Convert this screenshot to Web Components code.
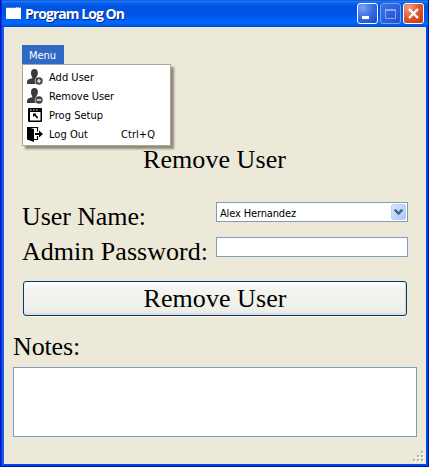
<!DOCTYPE html>
<html lang="en"><head><meta charset="utf-8"><title>Program Log On</title>
<style>
html,body{margin:0;height:100%;overflow:hidden}
body{background:#ece9d8;color:#000;font:11px/19px "DejaVu Sans Condensed","Noto Sans",sans-serif}
</style></head><body>
<xp-window></xp-window>
<script>
const define=(name,html,init)=>customElements.define(name,class extends HTMLElement{
  connectedCallback(){
    if(this.shadowRoot)return;
    const t=document.createElement('template');t.innerHTML=html;
    this.attachShadow({mode:'open'}).append(t.content.cloneNode(true));
    if(init)init.call(this,this.shadowRoot);
  }
});

// Text whose tracking is adjusted to reach the width given in "w".
define('fit-text','<style>:host{display:inline-block;white-space:pre}span{display:inline-block}</style><span><slot></slot></span>',function(r){
  const w=+this.getAttribute('w'),s=r.querySelector('span');
  const n=this.textContent.length;
  s.style.letterSpacing=((w-s.getBoundingClientRect().width)/n)+'px';
});

define('caption-button',`<style>
:host{display:block;box-sizing:border-box;width:21px;height:21px;border:1px solid #fff;border-radius:3px;background:radial-gradient(circle at 25% 20%,#7fa3f3,#3b6fe6 45%,#1745c4)}
:host([kind=max]){border-color:#7c9eee;background:linear-gradient(135deg,#3d72e4,#1d50d4)}
:host([kind=close]){background:radial-gradient(circle at 25% 20%,#f0a183,#e25a35 45%,#c5330c)}
svg{display:block}
</style><svg width="19" height="19"></svg>`,function(r){
  r.querySelector('svg').innerHTML={
   min:'<path d="M4 12h7v3H4z" fill="#fff"/>',
   max:'<path d="M4.500 5.500h10v9h-10zM4 5.500h11M4 6.500h11" fill="none" stroke="#8ba7ed"/>',
   close:'<path d="M5 5l9 9M14 5l-9 9" stroke="#fff" stroke-width="2.400"/>'}[this.getAttribute('kind')];
});

define('title-bar',`<style>
:host{display:flex;align-items:flex-start;height:27px;box-sizing:border-box;padding:3px 5px 0 6px;background:linear-gradient(#0040c8 0,#2a80f8 1px,#0561ee 3px,#0055e5 6px,#0054e3 13px,#0058ee 17px,#0066ff 22px,#0064fa 24px,#0052d8 26px,#0046c8)}
svg{flex:none;margin-top:4px}
fit-text{margin:1px auto 0 4px;color:#fff;font:bold 14px/20px "Open Sans","Noto Sans",sans-serif;text-shadow:1px 1px #08277e}
caption-button+caption-button{margin-left:2px}
</style>
<svg width="15" height="12"><path d="M0 1h15v11H0z" fill="#fff"/><path d="M0 0h15v1H0z" fill="#2489d8"/><path d="M10 0h1v1h-1zM12 0h1v1h-1z" fill="#a8dcf5"/><path d="M14 0h1v1h-1z" fill="#e08a60"/></svg>
<fit-text w="99">Program Log On</fit-text>
<caption-button kind="min"></caption-button><caption-button kind="max"></caption-button><caption-button kind="close"></caption-button>`);

const person='<path d="M7.500 0C9.900 0 11 1.700 10.900 4c0 1.900-.7 3-1.500 4v1.300l2 .7v5H0v-1.500c0-2.400 1-3.200 3.200-3.700l2-.6V8C4.500 7 4 6 4 4 4 1.600 5.200 0 7.500 0z" fill="#3b3b3b"/><circle cx="12" cy="12" r="4.300" fill="#fff"/><circle cx="12" cy="12" r="3.700" fill="#444"/>';
const icons={
 add:person+'<path d="M10 12h4M12 10v4" stroke="#fff" stroke-width="1.200"/>',
 remove:person+'<path d="M9.800 12h4.400" stroke="#fff" stroke-width="1.400"/>',
 setup:'<rect x="1" y="1" width="14" height="14" rx="1"/><path d="M3 5h10.500v8.500H3z" fill="#fff"/><path d="M3 2.500h1.500v1H3zM6 2.500h1.500v1H6zM9 2.500h1.500v1H9z" fill="#fff"/><path d="M6 6.500h3.500l-.9 1.100 2.600 2.600-1.200 1.200-2.500-2.700L6 10z"/>',
 logout:'<path d="M0 1l7 2v13l-7-2.500z"/><path d="M0 1.500h10.500v4M10.500 10v3.500H6" fill="none" stroke="#000" stroke-width="1.200"/><path d="M8 7h4V4.500L16 8l-4 3.500V9H8z"/>'};
define('menu-item',`<style>
:host{display:flex;height:19px;align-items:center;padding:0 15px 0 4px}
svg{width:16px;height:16px;flex:none;margin-right:6px}
.t,.k{position:relative;top:1px}
.k{margin-left:auto}
</style><svg viewBox="0 0 16 16"></svg><span class="t"><slot></slot></span><span class="k"><slot name="key"></slot></span>`,function(r){r.querySelector('svg').innerHTML=icons[this.getAttribute('icon')]});

define('main-menu',`<style>
:host{display:block;position:relative;width:42px;height:19px;background:#316ac5;color:#fff;padding-left:7px;box-sizing:border-box;line-height:21px}
.pop{position:absolute;z-index:2;left:0;top:19px;width:149px;height:82px;box-sizing:border-box;border:1px solid #aca899;background:#fff;color:#000;padding:2px 0;line-height:19px;box-shadow:3px 3px 2px #8e8b7e}
</style><fit-text w="27">Menu</fit-text>
<div class="pop">
<menu-item icon="add"><fit-text w="45">Add User</fit-text></menu-item>
<menu-item icon="remove"><fit-text w="65">Remove User</fit-text></menu-item>
<menu-item icon="setup"><fit-text w="54">Prog Setup</fit-text></menu-item>
<menu-item icon="logout"><fit-text w="39">Log Out</fit-text><fit-text slot="key" w="34">Ctrl+Q</fit-text></menu-item>
</div>`);

define('text-field',`<style>
:host{display:flex;align-items:center;box-sizing:border-box;height:20px;border:1px solid #7f9db9;background:#fff;padding:1px 1px 1px 3px}
svg{margin-left:auto;display:none}:host([combo]) svg{display:block}
slot{display:block;padding-top:2px}
</style><slot></slot><svg width="15" height="16"><defs><linearGradient id="g" x1="0" y1="0" x2="1" y2="1"><stop stop-color="#dbe6ff"/><stop offset="1" stop-color="#adc5f8"/></linearGradient></defs><rect x=".5" y=".5" width="14" height="15" rx="1.500" fill="url(#g)" stroke="#bccff8"/><path d="M3.700 5.700l3.800 3.800 3.800-3.800" fill="none" stroke="#4d6185" stroke-width="2.400"/></svg>`);

define('push-button',`<style>
:host{display:flex;justify-content:center;box-sizing:border-box;height:35px;border:1px solid #003c74;border-radius:3px;background:linear-gradient(#fff,#f4f4f0 20%,#eeeeea 88%,#dcd9d0);box-shadow:inset -1px 0 1px #d8d5cc,0 1px #f7f5ed;padding-top:2px}
</style><slot></slot>`);

define('size-grip','<style>:host{display:block;width:12px;height:12px}</style><svg width="12" height="12" style="display:block"></svg>',r=>{
  let s='';for(const [x,y] of [[8,0],[4,4],[8,4],[0,8],[4,8],[8,8]])s+=`<path d="M${x+1} ${y+1}h2v2h-2z" fill="#fff"/><path d="M${x} ${y}h2v2h-2z" fill="#b8b4a3"/>`;
  r.querySelector('svg').innerHTML=s;
});

define('xp-window',`<style>
:host{display:flex;flex-direction:column;width:429px;height:467px;position:relative}
main{flex:1;box-sizing:border-box;border:solid #0046ee;border-width:0 3px 3px 4px;border-left-color:#1660ee;padding:18px 9px 0;display:flex;flex-direction:column;background:#ece9d8}
.edge{position:absolute;inset:0;box-shadow:inset 1px 0 #0018c8,inset 2px 0 #0831d9,inset -1px -1px #00138c;pointer-events:none}
.big{font:26px/30px "Liberation Serif",serif}
main>main-menu{margin-left:9px}
h1{margin:81px 0 0 130px!important;font-weight:normal;height:30px}
form{display:grid;grid-template-columns:194px 192px;grid-template-rows:30px 30px;row-gap:5px;margin:26px 0 0 9px}
form .big{padding-top:1px}
text-field{margin-top:1px}
push-button{margin:15px 10px 0;width:384px}
.notes{margin-top:16px;height:30px}
text-field.area{height:70px;margin:5px 0 0;width:404px}
size-grip{margin:14px -8px 0 auto}
</style>
<title-bar></title-bar>
<main>
<main-menu></main-menu>
<h1 class="big"><fit-text w="143">Remove User</fit-text></h1>
<form><fit-text class="big" w="124">User Name:</fit-text><text-field combo><fit-text w="76">Alex Hernandez</fit-text></text-field>
<fit-text class="big" w="186">Admin Password:</fit-text><text-field></text-field></form>
<push-button class="big"><fit-text w="143">Remove User</fit-text></push-button>
<fit-text class="big notes" w="67">Notes:</fit-text>
<text-field class="area"></text-field>
<size-grip></size-grip>
</main><div class="edge"></div>`);
</script></body></html>
